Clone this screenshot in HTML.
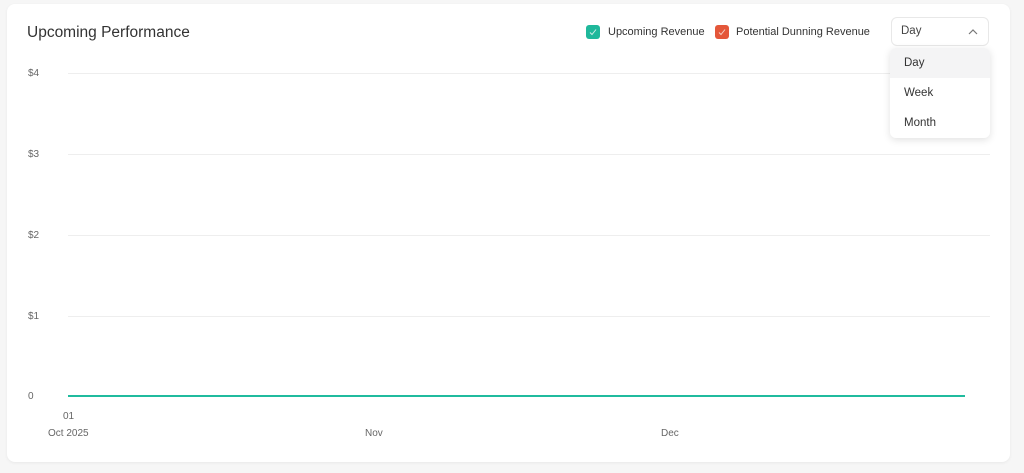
<!DOCTYPE html>
<html><head><style>
body{margin:0;width:1024px;height:473px;background:#f6f6f6;font-family:"Liberation Sans",sans-serif;position:relative;overflow:hidden}
.card{position:absolute;left:7px;top:4px;width:1003px;height:458px;background:#fff;border-radius:8px;box-shadow:0 1px 3px rgba(0,0,0,.06)}
.t{position:absolute;font-size:10px;color:#666}
.g{position:absolute;left:68px;width:922px;height:1px;background:#eeeeee}
.cb{position:absolute;top:25px;width:14px;height:14px;border-radius:3px}
.cb svg{position:absolute;left:2px;top:2px}
</style></head><body>
<div class="card"></div>
<div style="position:absolute;left:27px;top:24px;font-size:15.5px;color:#333">Upcoming Performance</div>
<div class="cb" style="left:586px;background:#1fb89b"><svg width="10" height="10"><path d="M2 5.5l2 2 4-5" stroke="#cfeee7" stroke-width="1" fill="none"/></svg></div>
<div style="position:absolute;left:608px;top:26px;font-size:11px;color:#333">Upcoming Revenue</div>
<div class="cb" style="left:715px;background:#e4573a"><svg width="10" height="10"><path d="M2 5.5l2 2 4-5" stroke="#f6d0c6" stroke-width="1" fill="none"/></svg></div>
<div style="position:absolute;left:736px;top:26px;font-size:11px;color:#333">Potential Dunning Revenue</div>
<div style="position:absolute;left:891px;top:17px;width:98px;height:29px;border:1px solid #e8e8e8;border-radius:6px;box-sizing:border-box;background:#fff"></div>
<div style="position:absolute;left:901px;top:25px;font-size:11.5px;color:#444">Day</div>
<svg style="position:absolute;left:968px;top:28px" width="10" height="8"><path d="M1 6l4-4 4 4" stroke="#777" stroke-width="1.2" fill="none"/></svg>
<div class="t" style="left:28px;top:68px">$4</div>
<div class="t" style="left:28px;top:149px">$3</div>
<div class="t" style="left:28px;top:230px">$2</div>
<div class="t" style="left:28px;top:311px">$1</div>
<div class="t" style="left:28px;top:391px">0</div>
<div class="g" style="top:73px"></div>
<div class="g" style="top:154px"></div>
<div class="g" style="top:235px"></div>
<div class="g" style="top:316px"></div>
<div style="position:absolute;left:68px;top:395px;width:897px;height:2px;background:#20bb9e"></div>
<div class="t" style="left:63px;top:411px">01</div>
<div class="t" style="left:48px;top:428px">Oct 2025</div>
<div class="t" style="left:365px;top:428px">Nov</div>
<div class="t" style="left:661px;top:428px">Dec</div>
<div style="position:absolute;left:890px;top:48px;width:100px;height:90px;background:#fff;border-radius:6px;box-shadow:0 2px 8px rgba(0,0,0,.12);overflow:hidden;font-size:11.5px;color:#333">
<div style="height:30px;background:#f4f4f5;line-height:31px;padding-left:14px">Day</div>
<div style="height:30px;line-height:31px;padding-left:14px">Week</div>
<div style="height:30px;line-height:31px;padding-left:14px">Month</div>
</div>
</body></html>
